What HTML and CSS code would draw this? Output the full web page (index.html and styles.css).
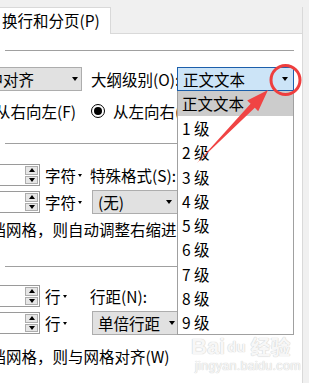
FILE: index.html
```html
<!DOCTYPE html>
<html lang="zh-CN">
<head>
<meta charset="utf-8">
<link rel="stylesheet" href="styles.css">
</head>
<body>
<div class="screen">
  <div class="tabs">
    <div class="tab">换行和分页(P)</div>
    <div class="tabfill"></div>
  </div>
  <div class="panel">
    <div class="sep"></div>
    <div class="row r1">
      <div class="combo c-align"><span>居中对齐</span><span class="carr"></span></div>
      <span class="lbl l-outline">大纲级别(O):</span>
      <div class="combo c-outline"><span>正文文本</span><span class="carr"></span></div>
    </div>
    <div class="row r2">
      <span class="rtl">从右向左(F)</span>
      <span class="radio"><span class="dot"></span></span>
      <span class="ltr">从左向右(L)</span>
    </div>
    <div class="sep s2"></div>
    <div class="row r3">
      <div class="spin"><span class="spinbtns"><span class="sb"><span class="up"></span></span><span class="sb"><span class="dn"></span></span></span></div>
      <span class="unit">字符<span class="tiny"></span></span>
      <span class="lbl">特殊格式(S):</span>
    </div>
    <div class="row r4">
      <div class="spin"><span class="spinbtns"><span class="sb"><span class="up"></span></span><span class="sb"><span class="dn"></span></span></span></div>
      <span class="unit">字符<span class="tiny"></span></span>
      <div class="combo c-none"><span>(无)</span><span class="carr"></span></div>
    </div>
    <div class="row r5"><span class="cuttext">文档网格，则自动调整右缩进(D)</span></div>
    <div class="sep s3"></div>
    <div class="row r6">
      <div class="spin"><span class="spinbtns"><span class="sb"><span class="up"></span></span><span class="sb"><span class="dn"></span></span></span></div>
      <span class="unit">行<span class="tiny"></span></span>
      <span class="lbl">行距(N):</span>
    </div>
    <div class="row r7">
      <div class="spin"><span class="spinbtns"><span class="sb"><span class="up"></span></span><span class="sb"><span class="dn"></span></span></span></div>
      <span class="unit">行<span class="tiny"></span></span>
      <div class="combo c-line"><span>单倍行距</span><span class="carr"></span></div>
      <div class="valbox"></div>
    </div>
    <div class="row r8"><span class="cuttext">文档网格，则与网格对齐(W)</span></div>
  </div>

  <ul class="list">
    <li class="sel">正文文本</li>
    <li>1 级</li>
    <li>2 级</li>
    <li>3 级</li>
    <li>4 级</li>
    <li>5 级</li>
    <li>6 级</li>
    <li>7 级</li>
    <li>8 级</li>
    <li>9 级</li>
  </ul>

  <div class="wm">
    <div class="wm-top"><span class="wm-bai">Bai</span><span class="wm-paw">du</span><span class="wm-jy">经验</span></div>
    <div class="wm-url">jingyan.baidu.com</div>
  </div>

  <svg class="annot" width="309" height="383" viewBox="0 0 309 383">
    <circle cx="285.5" cy="80" r="14.5" fill="none" stroke="#ee3e3e" stroke-width="3"/>
    <polygon points="197,163 250.6,103.8 247.2,100.4 268,90 258.2,111.2 254.8,107.8" fill="#f04444"/>
  </svg>
</div>
</body>
</html>
```

FILE: styles.css
```css
* { box-sizing: border-box; }
body {
  margin: 0;
  font-family: "Noto Sans CJK SC", "Noto Sans", sans-serif;
  font-size: 15.5px;
  color: #000;
}
.screen {
  width: 309px;
  height: 383px;
  overflow: hidden;
  position: relative;
  background: #f0f0f0;
}
.tabs {
  display: flex;
  width: 303px;
  height: 34px;
  padding-top: 7px;
}
.tab {
  width: 111px;
  background: #fff;
  border-top: 1px solid #d9d9d9;
  border-right: 1px solid #d9d9d9;
  padding-left: 2px;
  line-height: 25px;
  white-space: nowrap;
}
.tabfill {
  flex: 1;
  border-bottom: 1px solid #d9d9d9;
  border-right: 1px solid #d9d9d9;
}
.panel {
  width: 303px;
  height: 349px;
  background: #fff;
  border-right: 1px solid #d9d9d9;
  padding-top: 16px;
}
.sep {
  height: 1px;
  width: 289px;
  margin-left: 5px;
  background: #a0a0a0;
}
.s2 { margin-top: 20px; }
.s3 { margin-top: 27px; }
.row {
  display: flex;
  align-items: center;
  white-space: nowrap;
  line-height: 20px;
}
.r1 { margin-top: 16px; height: 24px; }
.r2 { margin-top: 8px; height: 24px; }
.r3 { margin-top: 20px; height: 22px; }
.r4 { margin-top: 5px; height: 22px; }
.r5 { margin-top: 6px; height: 20px; }
.r6 { margin-top: 18px; height: 22px; }
.r7 { margin-top: 5px; height: 22px; }
.r8 { margin-top: 12px; height: 20px; }

.combo {
  flex: none;
  height: 24px;
  display: flex;
  align-items: center;
  justify-content: space-between;
  background: #e1e1e1;
  border: 1px solid #adadad;
  padding: 0 4px 0 5px;
}
.carr {
  width: 0;
  height: 0;
  border-left: 3.5px solid transparent;
  border-right: 3.5px solid transparent;
  border-top: 4px solid #000;
}
.c-align { margin-left: -34px; width: 116px; padding-right: 3px; }
.l-outline { margin-left: 9px; width: 86px; }
.c-outline {
  width: 117px;
  background: #cce4f7;
  border-color: #1c5fab;
  padding-right: 5px;
}
.c-none { margin-left: 2px; width: 87px; padding-right: 6px; }
.c-line { margin-left: 2px; width: 90px; padding-right: 6px; }
.valbox {
  flex: none;
  margin-left: 9px;
  width: 62px;
  height: 24px;
  background: #fff;
  border: 1px solid #a0a0a0;
}

.rtl { margin-left: -5px; width: 96px; }
.radio {
  flex: none;
  width: 14px;
  height: 14px;
  border: 1px solid #000;
  border-radius: 50%;
  display: flex;
  align-items: center;
  justify-content: center;
}
.dot { width: 8px; height: 8px; border-radius: 50%; background: #000; }
.ltr { margin-left: 8px; }

.spin {
  flex: none;
  margin-left: -20px;
  width: 60px;
  height: 22px;
  background: #fff;
  border: 1px solid #9a9a9a;
  display: flex;
  justify-content: flex-end;
  padding: 1px 1px 1px 0;
}
.spinbtns {
  width: 13px;
  display: flex;
  flex-direction: column;
  gap: 1px;
}
.sb {
  flex: 1;
  background: #e6e6e6;
  border: 1px solid #adadad;
  display: flex;
  align-items: center;
  justify-content: center;
}
.up {
  width: 0; height: 0;
  border-left: 3px solid transparent;
  border-right: 3px solid transparent;
  border-bottom: 4px solid #000;
}
.dn {
  width: 0; height: 0;
  border-left: 3px solid transparent;
  border-right: 3px solid transparent;
  border-top: 4px solid #000;
}
.unit {
  flex: none;
  margin-left: 5px;
  width: 45px;
  display: flex;
  align-items: center;
}
.tiny {
  margin-left: 2px;
  width: 0; height: 0;
  border-left: 2.5px solid transparent;
  border-right: 2.5px solid transparent;
  border-top: 3px solid #000;
}
.lbl { flex: none; }
.cuttext { margin-left: -25px; }

.list {
  position: absolute;
  left: 177px;
  top: 91px;
  width: 117px;
  margin: 0;
  padding: 0;
  list-style: none;
  background: #fff;
  border: 1px solid #a0a0a0;
  border-top: none;
}
.list li {
  height: 24.25px;
  line-height: 24px;
  padding-left: 4px;
  white-space: nowrap;
}
.list li.sel {
  height: 25px;
  background: #cccccc;
}

.wm {
  position: absolute;
  left: 191px;
  top: 335px;
  color: #f7f7f7;
  text-shadow: 0 0 1px #cfcfcf, 0 0 1px #cfcfcf;
  font-family: "Liberation Sans", sans-serif;
}
.wm-top { display: flex; align-items: center; font-size: 22px; font-weight: bold; line-height: 24px; }
.wm-paw { font-size: 15px; margin-left: 2px; }
.wm-jy { margin-left: 5px; font-family: "Noto Sans CJK SC", sans-serif; font-size: 20px; }
.wm-url { font-size: 12.5px; line-height: 14px; margin-left: 4px; letter-spacing: 0.3px; }

.annot {
  position: absolute;
  left: 0;
  top: 0;
  pointer-events: none;
}
```
